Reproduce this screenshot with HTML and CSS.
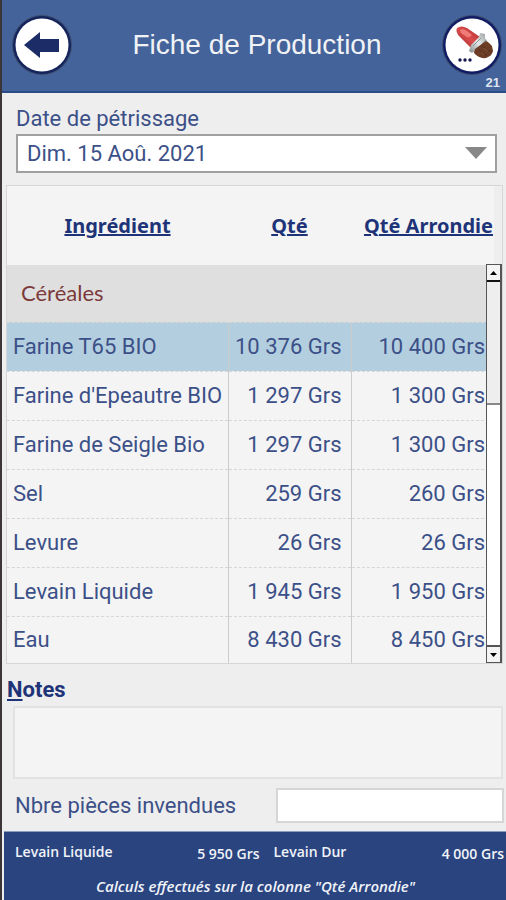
FILE: index.html
```html
<!DOCTYPE html>
<html lang="fr">
<head>
    <meta charset="UTF-8">
    <meta name="viewport" content="width=device-width, initial-scale=1.0">
    <title>Fiche de Production</title>
    <link rel="stylesheet" href="styles.css">
</head>
<body>
    <header class="top-bar">
        <button type="button" class="round-btn" aria-label="Retour">
            <svg viewBox="0 0 60 60" width="60" height="60">
                <circle cx="30" cy="30" r="30" fill="#3c4c70"/>
                <circle cx="30" cy="30" r="29" fill="#14245c"/>
                <circle cx="30" cy="30" r="26.5" fill="#fff"/>
                <path d="M12 30 L28 17 V24 H47 V37 H28 V43 Z" fill="#1c2c66"/>
            </svg>
        </button>
        <h1>Fiche de Production</h1>
        <div class="clean">
            <button type="button" class="round-btn" aria-label="Effacer">
                <svg viewBox="0 0 60 60" width="60" height="60">
                    <defs>
                        <linearGradient id="handle" x1="0" y1="1" x2="1" y2="0">
                            <stop offset="0" stop-color="#8c2424"/>
                            <stop offset="0.5" stop-color="#dc4c4c"/>
                            <stop offset="1" stop-color="#a83030"/>
                        </linearGradient>
                        <linearGradient id="ferrule" x1="0" y1="1" x2="1" y2="0">
                            <stop offset="0" stop-color="#80888a"/>
                            <stop offset="0.5" stop-color="#e4e8e8"/>
                            <stop offset="1" stop-color="#8c9494"/>
                        </linearGradient>
                    </defs>
                    <circle cx="30" cy="30" r="30" fill="#3c4c70"/>
                    <circle cx="30" cy="30" r="29" fill="#101c64"/>
                    <circle cx="30" cy="30" r="26.5" fill="#fff"/>
                    <path d="M15 13 Q19 10 25 13 L38 22 L29 33 L18 22 Q13 17 15 13 Z" fill="url(#handle)"/>
                    <path d="M18 15 Q21 13 25 16 L30 20 Q27 23 25 22 L19 18 Z" fill="#f07c78"/>
                    <path d="M38 18 L43 19 L43 23 L46 27 L34 38 L31 37 L30 38 L27 36 L29 30 L37 22 Z" fill="url(#ferrule)"/>
                    <path d="M31 31 L39 23 M34 35 L44 25" stroke="#8c9498" fill="none"/>
                    <path d="M44 26 Q48 28 50 31 L51 36 Q50 41 44 43 Q37 44 32 38 L33 34 Z" fill="#6c3c26"/>
                    <path d="M40 31 L49 37 M37 35 L45 41" stroke="#54301c" fill="none"/>
                    <path d="M42 33 L46 36 M39 37 L42 40" stroke="#8c5434" fill="none"/>
                    <circle cx="18" cy="45" r="1.7" fill="#14184c"/>
                    <circle cx="23" cy="45" r="1.7" fill="#14184c"/>
                    <circle cx="28" cy="45" r="1.7" fill="#14184c"/>
                </svg>
            </button>
            <span class="version">21</span>
        </div>
    </header>

    <main>
        <div class="date-field">
            <label for="date">Date de pétrissage</label>
            <div class="select-box">
                <select id="date">
                    <option>Dim. 15 Aoû. 2021</option>
                </select>
                <svg class="select-arrow" viewBox="0 0 22 12" width="22" height="12"><path d="M0 0 H22 L11 12 Z" fill="#888"/></svg>
            </div>
        </div>

        <div class="table-panel">
            <table class="ingredients">
                <thead>
                    <tr>
                        <th class="col-name">Ingrédient</th>
                        <th class="col-qty">Qté</th>
                        <th class="col-round">Qté Arrondie</th>
                    </tr>
                </thead>
                <tbody>
                    <tr class="group"><td colspan="3">Céréales</td></tr>
                    <tr class="selected"><td>Farine T65 BIO</td><td>10 376 Grs</td><td>10 400 Grs</td></tr>
                    <tr><td>Farine d'Epeautre BIO</td><td>1 297 Grs</td><td>1 300 Grs</td></tr>
                    <tr><td>Farine de Seigle Bio</td><td>1 297 Grs</td><td>1 300 Grs</td></tr>
                    <tr><td>Sel</td><td>259 Grs</td><td>260 Grs</td></tr>
                    <tr><td>Levure</td><td>26 Grs</td><td>26 Grs</td></tr>
                    <tr><td>Levain Liquide</td><td>1 945 Grs</td><td>1 950 Grs</td></tr>
                    <tr><td>Eau</td><td>8 430 Grs</td><td>8 450 Grs</td></tr>
                </tbody>
            </table>
            <div class="scrollbar">
                <button type="button" aria-label="Monter"><svg viewBox="0 0 7 4" width="7" height="4"><path d="M0 4 L3.5 0 L7 4 Z"/></svg></button>
                <div class="track"><div class="thumb"></div></div>
                <button type="button" aria-label="Descendre"><svg viewBox="0 0 7 4" width="7" height="4"><path d="M0 0 L3.5 4 L7 0 Z"/></svg></button>
            </div>
        </div>

        <div class="notes">
            <label for="notes"><u>N</u>otes</label>
            <textarea id="notes"></textarea>
        </div>

        <div class="unsold">
            <label for="unsold">Nbre pièces invendues</label>
            <input type="text" id="unsold">
        </div>
    </main>

    <footer class="bottom-bar">
        <dl class="totals">
            <dt>Levain Liquide</dt><dd>5 950 Grs</dd>
            <dt>Levain Dur</dt><dd>4 000 Grs</dd>
        </dl>
        <p>Calculs effectués sur la colonne "Qté Arrondie"</p>
    </footer>
</body>
</html>
```
FILE: styles.css
```css
:root {
    --bar-color: #44639a;
    --footer-color: #2a4480;
    --text-color: #3c5088;
    --title-color: #1f3478;
    --bg-color: #eeeeee;
    --panel-color: #f4f4f4;
    --line-color: #d6d6d6;
}

* {
    margin: 0;
    padding: 0;
    box-sizing: border-box;
}

body {
    font-family: Roboto, sans-serif;
    font-size: 22px;
    line-height: 26px;
    background-color: var(--bg-color);
    color: var(--text-color);
    border-left: 2px solid #3c3638;
    min-height: 100vh;
    display: flex;
    flex-direction: column;
}

.top-bar {
    display: flex;
    justify-content: space-between;
    height: 93px;
    padding: 15px 4px 0 10px;
    background-color: var(--bar-color);
    border-bottom: 2px solid #2c4c88;
}

.top-bar h1 {
    font: 28px/60px "Liberation Sans", sans-serif;
    color: #f0f2f6;
}

.round-btn {
    display: block;
    width: 60px;
    height: 60px;
    border: none;
    border-radius: 50%;
    background: none;
    cursor: pointer;
}

.clean {
    display: flex;
    flex-direction: column;
    align-items: flex-end;
}

.version {
    font: bold 13px/16px "Liberation Sans", sans-serif;
    color: #dfe6f2;
    padding-right: 2px;
}

main {
    flex: 1;
    display: flex;
    flex-direction: column;
}

.date-field {
    display: grid;
    gap: 2px;
    padding: 13px 9px 12px 14px;
}

.select-box {
    position: relative;
}

.select-box select {
    appearance: none;
    width: 100%;
    height: 39px;
    padding: 0 40px 0 9px;
    border: 2px solid #a0a0a0;
    border-radius: 0;
    background-color: #fff;
    color: var(--text-color);
    font: inherit;
}

.select-arrow {
    position: absolute;
    right: 10px;
    top: 13px;
    pointer-events: none;
}

.table-panel {
    position: relative;
    margin: 0 3px 0 4px;
    padding-right: 8px;
    border: 1px solid var(--line-color);
}

.ingredients {
    width: 100%;
    table-layout: fixed;
    border-collapse: collapse;
    background-color: var(--panel-color);
}

.ingredients th {
    height: 79px;
    font: bold 20px/26px "Noto Sans", sans-serif;
    color: var(--title-color);
    text-decoration: underline;
    white-space: nowrap;
}

.col-name {
    width: 221px;
}

.col-qty {
    width: 123px;
}

.ingredients .col-round {
    padding-right: 1px;
    text-align: right;
}

.ingredients td {
    height: 49px;
    padding: 0 6px;
    border-bottom: 1px dashed var(--line-color);
    white-space: nowrap;
}

.ingredients td + td {
    padding-right: 9px;
    border-left: 1px solid #ccc;
    text-align: right;
}

.ingredients .group td {
    height: 57px;
    padding-left: 14px;
    background-color: #dfdfdf;
    color: #7c3a3a;
    font-family: Lato, sans-serif;
}

.ingredients .selected td {
    background-color: #b3cfdf;
}

.ingredients tr:last-child td {
    border-bottom: none;
}

.ingredients tbody tr:last-child td {
    height: 47px;
}

.scrollbar {
    position: absolute;
    top: 78px;
    right: 0;
    bottom: 0;
    width: 16px;
    display: flex;
    flex-direction: column;
    border: 1px solid #555;
    border-right-width: 2px;
    background-color: #fff;
}

.scrollbar button {
    display: grid;
    place-items: center;
    height: 15px;
    border: none;
    background-color: var(--panel-color);
}

.track {
    flex: 1;
    border-top: 2px solid #111;
    border-bottom: 2px solid #555;
}

.thumb {
    height: 34%;
    background-color: #eee;
    border-bottom: 2px solid #888;
}

.notes {
    display: grid;
    gap: 3px;
    padding: 13px 3px 9px 5px;
}

.notes label {
    font-weight: bold;
    color: var(--title-color);
}

.notes textarea {
    display: block;
    height: 73px;
    margin-left: 6px;
    border: 2px solid #e2e2e2;
    background-color: var(--panel-color);
    resize: none;
}

.unsold {
    display: flex;
    justify-content: space-between;
    align-items: center;
    gap: 40px;
    padding: 0 2px 8px 13px;
}

.unsold input {
    flex: 1;
    max-width: 228px;
    height: 35px;
    border: 2px solid var(--line-color);
    background-color: #fff;
}

.bottom-bar {
    height: 69px;
    margin-left: 2px;
    padding: 10px 2px 0 11px;
    background-color: var(--footer-color);
    border-top: 1px solid #8c9cbc;
    color: #f0f3f8;
    font: 600 14px/20px "Open Sans", sans-serif;
}

.totals {
    display: grid;
    grid-template-columns: 1fr 1fr 1fr 1fr;
}

.totals dt {
    white-space: nowrap;
}

.totals dd {
    padding-top: 2px;
    text-align: right;
}

.totals dt + dd + dt {
    padding-left: 14px;
}

.bottom-bar p {
    margin-top: 12px;
    padding-right: 8px;
    font-size: 15px;
    text-align: center;
    font-style: italic;
}
```
